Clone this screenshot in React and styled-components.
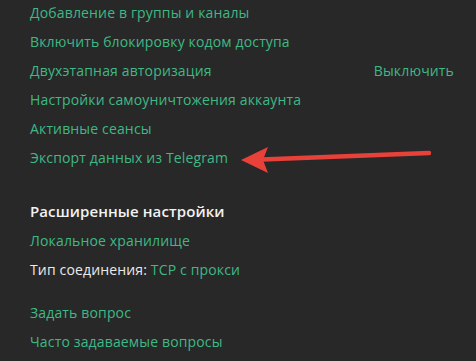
import React from 'react';
import styled, { createGlobalStyle } from 'styled-components';

const GlobalStyle = createGlobalStyle`
  html, body {
    margin: 0;
    padding: 0;
    background: #282828;
  }
`;

const Page = styled.div`
  position: relative;
  width: 476px;
  height: 361px;
  overflow: hidden;
  background: #282828;
  font-family: 'Open Sans', 'DejaVu Sans', sans-serif;
  font-size: 14px;
  letter-spacing: 0.15px;
`;

const Section = styled.div`
  display: flex;
  flex-direction: column;
  padding: 0 22px 0 30px;
  margin-top: ${(p) => p.top || 0}px;
`;

const Row = styled.div`
  display: flex;
  justify-content: space-between;
  align-items: center;
  height: 29px;
  line-height: 29px;
  white-space: nowrap;
`;

const Link = styled.span`
  color: #3fb886;
`;

const Label = styled.span`
  color: #ebebeb;
`;

const Heading = styled.div`
  height: 29px;
  line-height: 29px;
  color: #f2f2f2;
  font-weight: 600;
  font-size: 15px;
  letter-spacing: 0.1px;
`;

const Arrow = styled.svg`
  position: absolute;
  left: 0;
  top: 0;
  pointer-events: none;
`;

const App = () => {
  return (
    <Page>
      <GlobalStyle />
      <Section top={-2}>
        <Row><Link>Добавление в группы и каналы</Link></Row>
        <Row><Link>Включить блокировку кодом доступа</Link></Row>
        <Row>
          <Link>Двухэтапная авторизация</Link>
          <Link>Выключить</Link>
        </Row>
        <Row><Link>Настройки самоуничтожения аккаунта</Link></Row>
        <Row><Link>Активные сеансы</Link></Row>
        <Row><Link>Экспорт данных из Telegram</Link></Row>
      </Section>
      <Section top={25}>
        <Heading>Расширенные настройки</Heading>
        <Row><Link>Локальное хранилище</Link></Row>
        <Row>
          <span>
            <Label>Тип соединения: </Label>
            <Link>TCP с прокси</Link>
          </span>
        </Row>
      </Section>
      <Section top={14}>
        <Row><Link>Задать вопрос</Link></Row>
        <Row><Link>Часто задаваемые вопросы</Link></Row>
      </Section>
      <Arrow width="476" height="361" viewBox="0 0 476 361">
        <line x1="262" y1="159.5" x2="429" y2="153" stroke="#e8413a" strokeWidth="4.5" strokeLinecap="round" />
        <path d="M241 160 L268 147 L263 160 L268 173 Z" fill="#e8413a" />
      </Arrow>
    </Page>
  );
};

export default App;
